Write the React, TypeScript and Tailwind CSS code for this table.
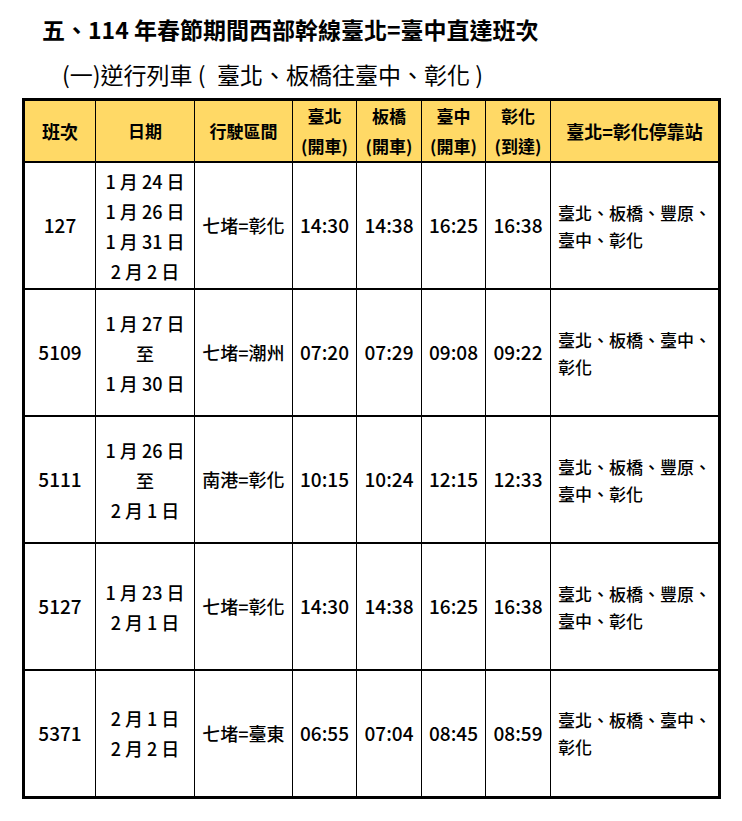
const font = { fontFamily: '"Noto Sans CJK TC", "Noto Sans", sans-serif' };

const rows = [
  {
    no: "127",
    dates: ["1 月 24 日", "1 月 26 日", "1 月 31 日", "2 月 2 日"],
    route: "七堵=彰化",
    times: ["14:30", "14:38", "16:25", "16:38"],
    stops: ["臺北、板橋、豐原、", "臺中、彰化"],
  },
  {
    no: "5109",
    dates: ["1 月 27 日", "至", "1 月 30 日"],
    route: "七堵=潮州",
    times: ["07:20", "07:29", "09:08", "09:22"],
    stops: ["臺北、板橋、臺中、", "彰化"],
  },
  {
    no: "5111",
    dates: ["1 月 26 日", "至", "2 月 1 日"],
    route: "南港=彰化",
    times: ["10:15", "10:24", "12:15", "12:33"],
    stops: ["臺北、板橋、豐原、", "臺中、彰化"],
  },
  {
    no: "5127",
    dates: ["1 月 23 日", "2 月 1 日"],
    route: "七堵=彰化",
    times: ["14:30", "14:38", "16:25", "16:38"],
    stops: ["臺北、板橋、豐原、", "臺中、彰化"],
  },
  {
    no: "5371",
    dates: ["2 月 1 日", "2 月 2 日"],
    route: "七堵=臺東",
    times: ["06:55", "07:04", "08:45", "08:59"],
    stops: ["臺北、板橋、臺中、", "彰化"],
  },
];

const heads = [
  ["臺北", "(開車)"],
  ["板橋", "(開車)"],
  ["臺中", "(開車)"],
  ["彰化", "(到達)"],
];

export default function App() {
  return (
    <div className="w-[742px] min-h-[821px] bg-white text-black" style={font}>
      <div className="pt-[12px] pl-[42px] text-[23px] font-bold leading-[34px]">
        五、114 年春節期間西部幹線臺北=臺中直達班次
      </div>
      <div className="mt-[11px] pl-[62px] text-[23px] leading-[34px]">
        (一)逆行列車 (&ensp;臺北、板橋往臺中、彰化 )
      </div>
      <table className="mt-[7px] ml-[22px] w-[696px] table-fixed border-collapse border-[3px] border-black">
        <colgroup>
          <col className="w-[72px]" />
          <col className="w-[99px]" />
          <col className="w-[98px]" />
          <col className="w-[64px]" />
          <col className="w-[65px]" />
          <col className="w-[64px]" />
          <col className="w-[65px]" />
          <col className="w-[169px]" />
        </colgroup>
        <thead>
          <tr className="h-[60px] bg-[#ffd966] text-[17px] font-bold">
            <th className="border border-black text-[18px]">班次</th>
            <th className="border border-black">日期</th>
            <th className="border border-black">行駛區間</th>
            {heads.map((h) => (
              <th key={h[0]} className="border border-black leading-[30px] whitespace-nowrap px-0">
                {h[0]}
                <br />
                {h[1]}
              </th>
            ))}
            <th className="border border-black text-[18px] whitespace-nowrap">臺北=彰化停靠站</th>
          </tr>
        </thead>
        <tbody>
          {rows.map((r) => (
            <tr key={r.no} className="h-[127px] border-t-2 border-black font-medium">
              <td className="border border-black text-center text-[19px]">{r.no}</td>
              <td className="border border-black text-center text-[18px] leading-[30px] whitespace-nowrap">
                {r.dates.map((d) => (
                  <div key={d}>{d}</div>
                ))}
              </td>
              <td className="border border-black text-center text-[18px] whitespace-nowrap">{r.route}</td>
              {r.times.map((t, i) => (
                <td key={i} className="border border-black text-center text-[19px] px-0">
                  {t}
                </td>
              ))}
              <td className="border border-black pl-[7px] text-[17px] leading-[27px] whitespace-nowrap">
                {r.stops.map((s) => (
                  <div key={s}>{s}</div>
                ))}
              </td>
            </tr>
          ))}
        </tbody>
      </table>
    </div>
  );
}
